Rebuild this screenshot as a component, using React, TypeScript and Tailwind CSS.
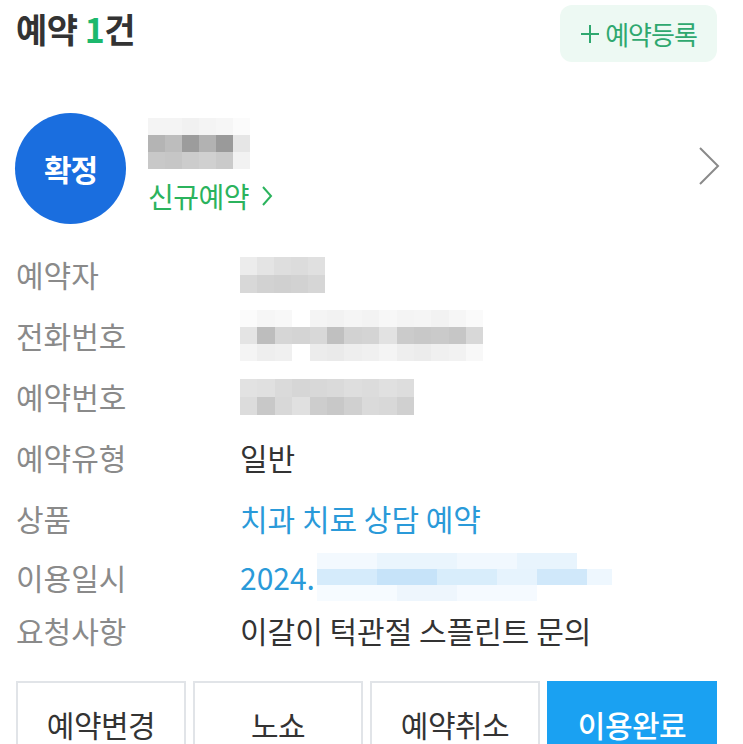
import React from 'react';

const font = { fontFamily: '"Noto Sans CJK KR", "Noto Sans", sans-serif' };

// pixelated placeholder for the blurred personal data
const Mosaic: React.FC<{ cells: string[][]; cell: number; h: number }> = ({ cells, cell, h }) => (
    <div className="flex flex-col">
        {cells.map((row, i) => (
            <div key={i} className="flex">
                {row.map((c, j) => (
                    <div key={j} style={{ width: cell, height: h, backgroundColor: c }} />
                ))}
            </div>
        ))}
    </div>
);

const rows: { label: string; value: React.ReactNode; h: string }[] = [
    {
        label: '예약자',
        h: 'h-[61px]',
        value: (
            <Mosaic
                cell={17}
                h={18}
                cells={[
                    ['#ececec', '#e4e4e4', '#dedede', '#dcdcdc', '#e0e0e0'],
                    ['#d8d8d8', '#d2d2d2', '#d0d0d0', '#d2d2d2', '#d6d6d6'],
                ]}
            />
        ),
    },
    {
        label: '전화번호',
        h: 'h-[61px]',
        value: (
            <Mosaic
                cell={17.4}
                h={17}
                cells={[
                    ['#fbfbfb', '#f6f6f6', '#f8f8f8', '#ffffff', '#f4f4f4', '#f2f2f2', '#f5f5f5', '#f3f3f3', '#f7f7f7', '#f4f4f4', '#f5f5f5', '#f2f2f2', '#f6f6f6', '#fafafa'],
                    ['#e4e4e4', '#bdbdbd', '#d6d6d6', '#d4d4d4', '#d8d8d8', '#c0c0c0', '#d2d2d2', '#d4d4d4', '#e2e2e2', '#cbcbcb', '#c8c8c8', '#cacaca', '#c6c6c6', '#d8d8d8'],
                    ['#f4f4f4', '#eeeeee', '#f0f0f0', '#ffffff', '#ececec', '#eaeaea', '#eeeeee', '#f0f0f0', '#f4f4f4', '#eeeeee', '#ececec', '#f0f0f0', '#f2f2f2', '#f8f8f8'],
                ]}
            />
        ),
    },
    {
        label: '예약번호',
        h: 'h-[61px]',
        value: (
            <Mosaic
                cell={17.4}
                h={18}
                cells={[
                    ['#e2e2e2', '#e0e0e0', '#dadada', '#d6d6d6', '#d8d8d8', '#dadada', '#dedede', '#dcdcdc', '#e0e0e0', '#dddddd'],
                    ['#dcdcdc', '#c8c8c8', '#d8d8d8', '#e0e0e0', '#cdcdcd', '#c8c8c8', '#d0d0d0', '#dadada', '#d8d8d8', '#d0d0d0'],
                ]}
            />
        ),
    },
    { label: '예약유형', h: 'h-[61px]', value: <span className="text-[#333]">일반</span> },
    { label: '상품', h: 'h-[61px]', value: <span className="text-[#2a9ad9]">치과 치료 상담 예약</span> },
    {
        label: '이용일시',
        h: 'h-[56px]',
        value: (
            <div className="flex items-center">
                <span className="text-[#2a9ad9]">2024.</span>
                <div className="ml-[2px] flex flex-col">
                    <div className="flex h-[16px]">
                        <div className="w-[60px] bg-[#f3f9fe]" />
                        <div className="w-[80px] bg-[#eaf5fd]" />
                        <div className="w-[60px] bg-[#f1f8fe]" />
                        <div className="w-[60px] bg-[#e8f4fd]" />
                    </div>
                    <div className="flex h-[16px]">
                        <div className="w-[60px] bg-[#d5ebfb]" />
                        <div className="w-[60px] bg-[#c6e3f9]" />
                        <div className="w-[60px] bg-[#d8edfb]" />
                        <div className="w-[40px] bg-[#e6f3fd]" />
                        <div className="w-[50px] bg-[#d0e8fa]" />
                        <div className="w-[25px] bg-[#eef7fe]" />
                    </div>
                    <div className="flex h-[16px]">
                        <div className="w-[80px] bg-[#f6fbff]" />
                        <div className="w-[60px] bg-[#eef6fd]" />
                        <div className="w-[80px] bg-[#f5faff]" />
                    </div>
                </div>
            </div>
        ),
    },
    { label: '요청사항', h: 'h-[50px]', value: <span className="text-[#333]">이갈이 턱관절 스플린트 문의</span> },
];

const actions = ['예약변경', '노쇼', '예약취소', '이용완료'];

export default function App() {
    return (
        <div className="w-[743px] h-[744px] overflow-hidden bg-white" style={font}>
            {/* header */}
            <div className="flex justify-between items-start pl-4 pr-[26px] pt-[5px]">
                <h1 className="mt-[2px] text-[34px] font-bold tracking-[-0.5px] text-[#333] leading-[44px]">
                    예약 <span className="text-[#1db86d]">1</span>건
                </h1>
                <button className="flex items-center gap-[5px] h-[57px] w-[157px] justify-center rounded-[12px] bg-[#edf9f3] text-[26px] text-[#2fa86f] tracking-[-1px]">
                    <svg width="20" height="20" viewBox="0 0 20 20" className="stroke-[#2fa86f]">
                        <path d="M10 1v18M1 10h18" strokeWidth="2" />
                    </svg>
                    예약등록
                </button>
            </div>

            {/* status */}
            <div className="flex items-center mt-[51px] pl-[15px] pr-[22px]">
                <div className="w-[111px] h-[111px] rounded-full bg-[#1a6edf] flex items-center justify-center text-white text-[30px] font-bold tracking-[-1px]">
                    확정
                </div>
                <div className="ml-[22px] flex flex-col flex-1 self-start mt-[5px]">
                    <Mosaic
                        cell={17}
                        h={17}
                        cells={[
                            ['#f4f4f4', '#f4f4f4', '#f1f1f1', '#f4f4f4', '#f6f6f6', '#fbfbfb'],
                            ['#b4b4b4', '#bdbdbd', '#9c9c9c', '#b2b2b2', '#9a9a9a', '#e6e6e6'],
                            ['#c8c8c8', '#c6c6c6', '#cccccc', '#d0d0d0', '#cacaca', '#f2f2f2'],
                        ]}
                    />
                    <div className="mt-[9px] flex items-center text-[28px] leading-[36px] text-[#2bb35d] tracking-[-0.5px]">
                        신규예약
                        <svg width="12" height="22" viewBox="0 0 12 22" className="ml-[12px]">
                            <path d="M2 2l8 9-8 9" fill="none" stroke="#2bb35d" strokeWidth="2" />
                        </svg>
                    </div>
                </div>
                <svg width="24" height="40" viewBox="0 0 24 40" className="-mt-[6px]">
                    <path d="M3 2l18 18L3 38" fill="none" stroke="#8a8a8a" strokeWidth="2" />
                </svg>
            </div>

            {/* details */}
            <div className="mt-[20px] pl-4 flex flex-col text-[30px]">
                {rows.map(r => (
                    <div key={r.label} className={`flex items-center ${r.h}`}>
                        <span className="w-[224px] text-[#8a8a8a]">{r.label}</span>
                        <div className="flex-1">{r.value}</div>
                    </div>
                ))}
            </div>

            {/* actions */}
            <div className="mt-[26px] pl-4 pr-[26px] grid grid-cols-4 gap-[7px]">
                {actions.map((a, i) => (
                    <button
                        key={a}
                        className={`h-[86px] text-[30px] tracking-[-0.5px] ${
                            i === 3
                                ? 'bg-[#1aa1f2] text-white font-medium'
                                : 'border-2 border-[#e1e4e8] text-[#333]'
                        }`}
                    >
                        {a}
                    </button>
                ))}
            </div>
        </div>
    );
}
